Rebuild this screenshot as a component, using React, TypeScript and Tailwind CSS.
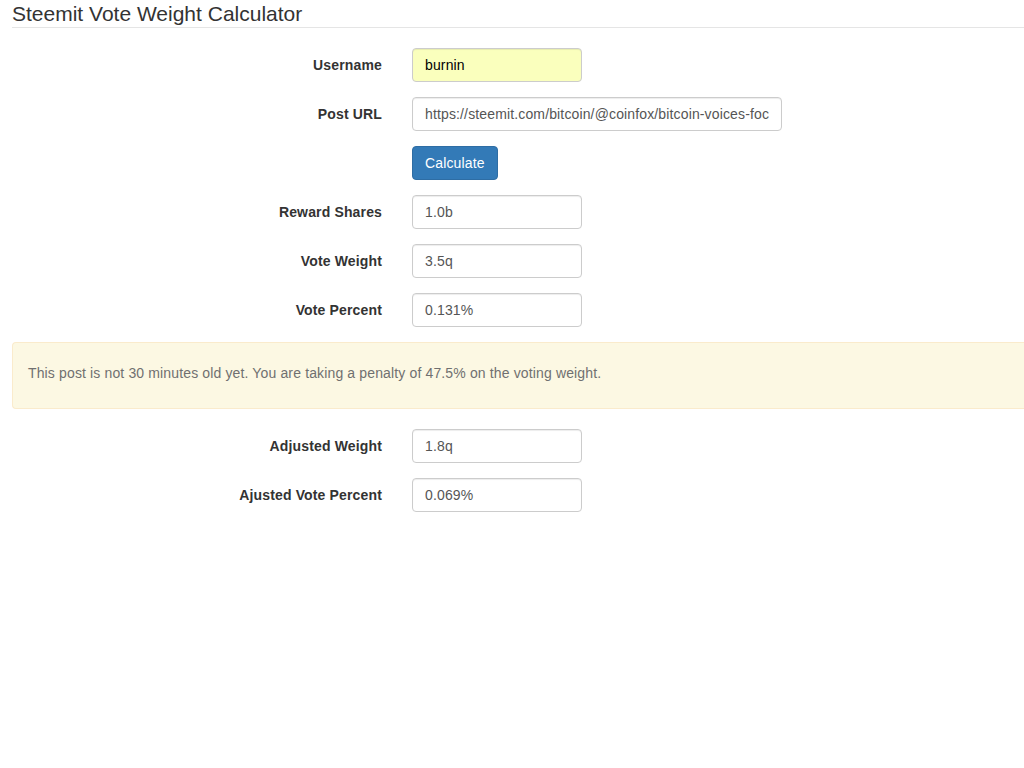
import React from "react";

const font = { fontFamily: '"Liberation Sans", Arial, Helvetica, sans-serif' };

function Row({ label, children }: { label: string; children: React.ReactNode }) {
  return (
    <div className="flex items-center mb-[15px]">
      <label className="w-[370px] text-right font-bold text-[14px] tracking-[0.15px] text-[#333]">{label}</label>
      <div className="ml-[30px]">{children}</div>
    </div>
  );
}

function Input({ value, w = 170, yellow = false }: { value: string; w?: number; yellow?: boolean }) {
  return (
    <div
      className={`h-[34px] border border-[#ccc] rounded-[4px] px-3 flex items-center text-[14px] tracking-[0.14px] shadow-[inset_0_1px_1px_rgba(0,0,0,0.075)] ${
        yellow ? "bg-[#faffbd] text-[#000]" : "bg-white text-[#555]"
      }`}
      style={{ width: w }}
    >
      <div className="overflow-hidden whitespace-nowrap w-full">{value}</div>
    </div>
  );
}

export default function App() {
  return (
    <div className="bg-white min-h-[768px] w-[1024px] overflow-hidden text-[#333]" style={font}>
      <div className="pl-3">
        <h1 className="text-[21px] leading-[27px] text-[#333]">Steemit Vote Weight Calculator</h1>
        <div className="border-t border-[#e5e5e5] mb-5" />
        <Row label="Username">
          <Input value="burnin" yellow />
        </Row>
        <Row label="Post URL">
          <Input value="https://steemit.com/bitcoin/@coinfox/bitcoin-voices-focus-on-the-future" w={370} />
        </Row>
        <div className="flex mb-[15px]">
          <div className="w-[370px]" />
          <button className="ml-[30px] h-[34px] px-3 bg-[#337ab7] border border-[#2e6da4] rounded-[4px] text-white text-[14px] tracking-[0.14px]">
            Calculate
          </button>
        </div>
        <Row label="Reward Shares">
          <Input value="1.0b" />
        </Row>
        <Row label="Vote Weight">
          <Input value="3.5q" />
        </Row>
        <Row label="Vote Percent">
          <Input value="0.131%" />
        </Row>
        <div className="border border-r-0 border-[#faebcc] bg-[#fcf8e3] rounded-l-[4px] pl-[15px] pt-5 pb-[25px] text-[14px] tracking-[0.14px] leading-[20px] text-[#707070] mb-5 mt-px">
          This post is not 30 minutes old yet. You are taking a penalty of 47.5% on the voting weight.
        </div>
        <Row label="Adjusted Weight">
          <Input value="1.8q" />
        </Row>
        <Row label="Ajusted Vote Percent">
          <Input value="0.069%" />
        </Row>
      </div>
    </div>
  );
}
